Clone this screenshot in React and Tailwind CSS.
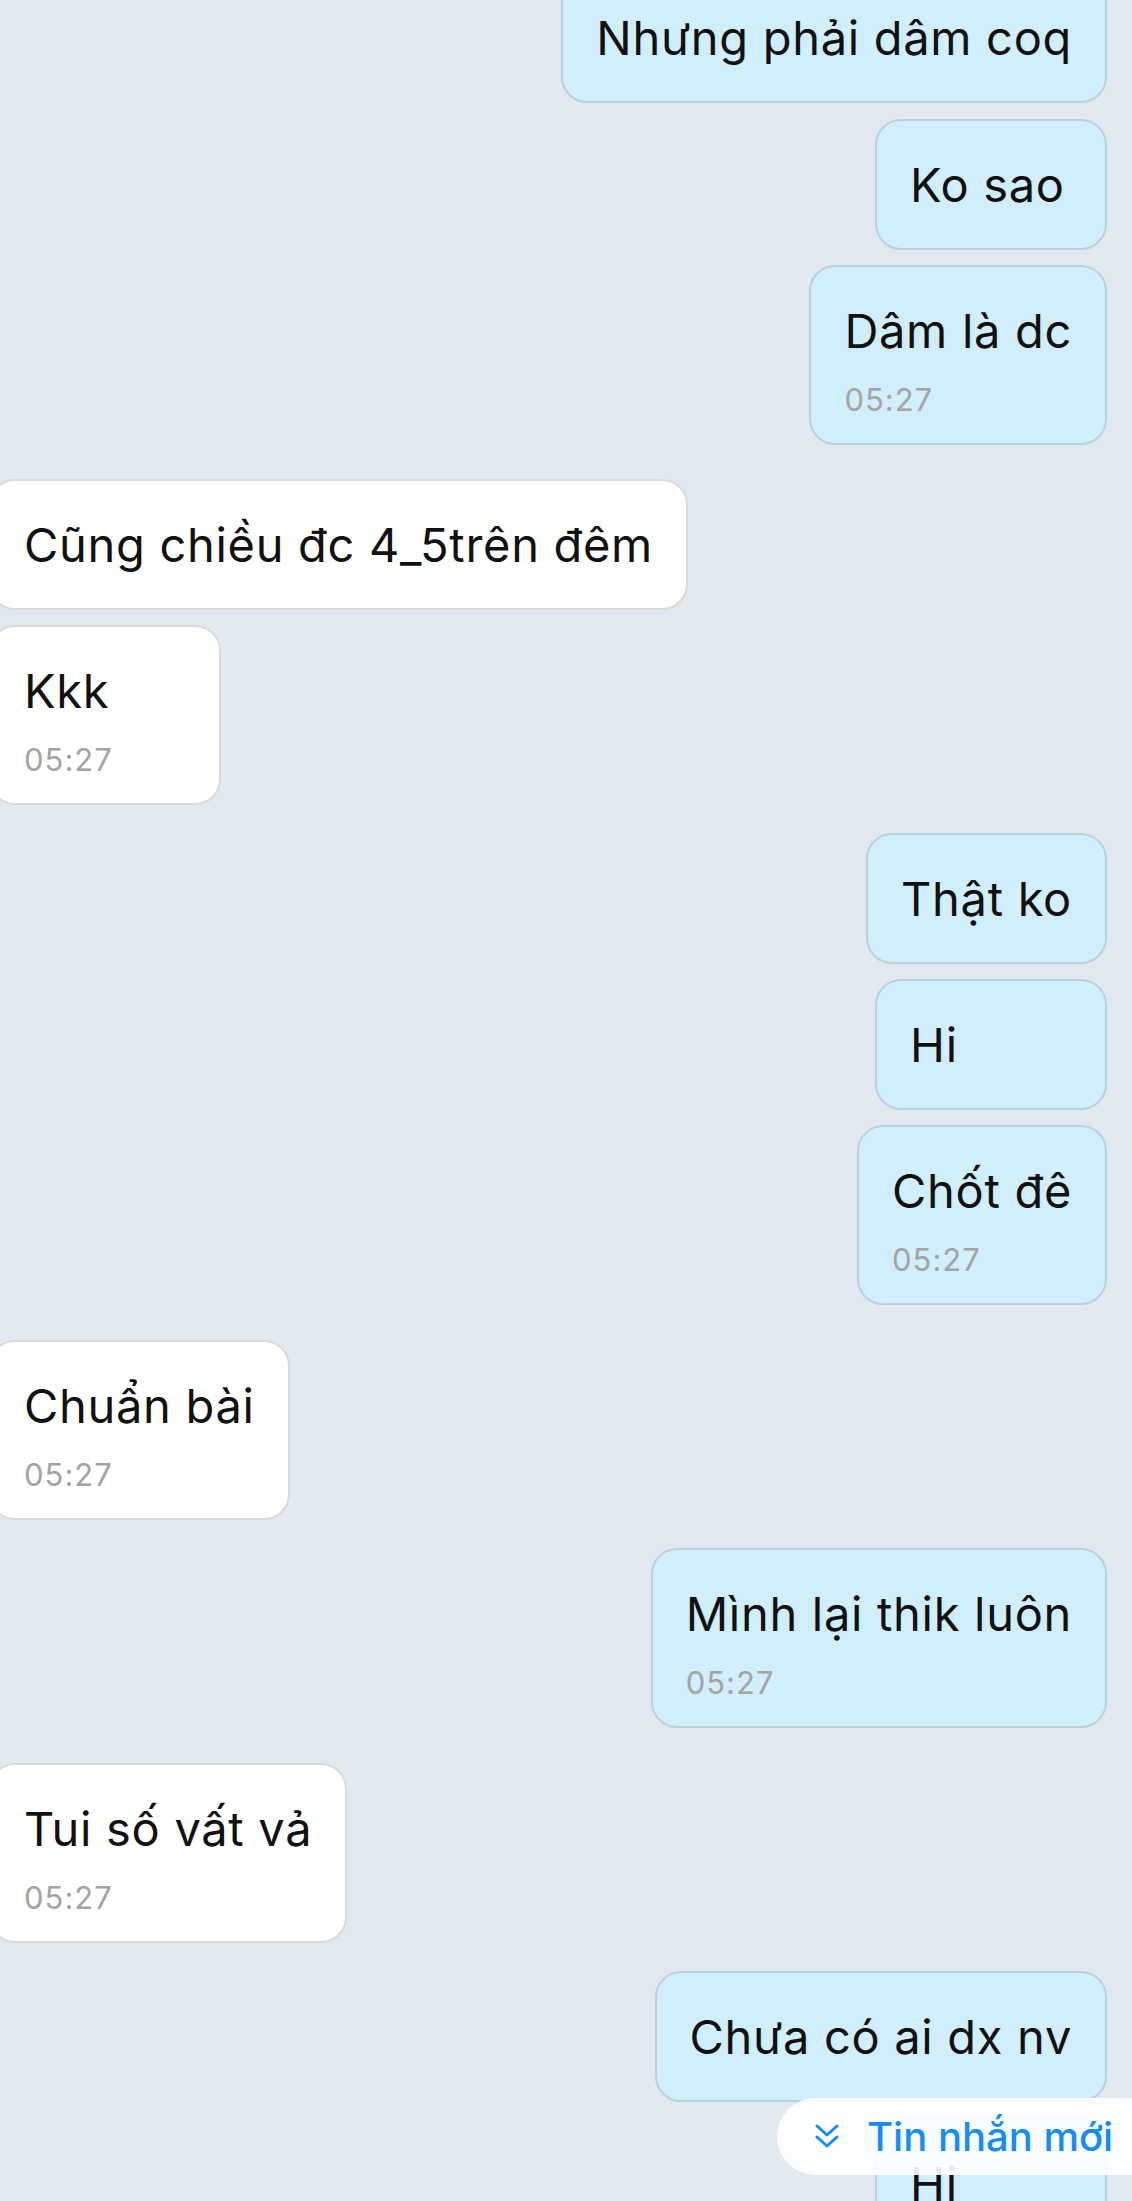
const messages = [
  { side: 'right', text: 'Nhưng phải dâm coq', gap: '-mt-[28px]' },
  { side: 'right', text: 'Ko sao', gap: 'mt-[16px]' },
  { side: 'right', text: 'Dâm là dc', time: '05:27', gap: 'mt-[15px]' },
  { side: 'left', text: 'Cũng chiều đc 4_5trên đêm', gap: 'mt-[34px]' },
  { side: 'left', text: 'Kkk', time: '05:27', gap: 'mt-[15px]' },
  { side: 'right', text: 'Thật ko', gap: 'mt-[28px]' },
  { side: 'right', text: 'Hi', gap: 'mt-[15px]' },
  { side: 'right', text: 'Chốt đê', time: '05:27', gap: 'mt-[15px]' },
  { side: 'left', text: 'Chuẩn bài', time: '05:27', gap: 'mt-[35px]' },
  { side: 'right', text: 'Mình lại thik luôn', time: '05:27', gap: 'mt-[28px]' },
  { side: 'left', text: 'Tui số vất vả', time: '05:27', gap: 'mt-[35px]' },
  { side: 'right', text: 'Chưa có ai dx nv', gap: 'mt-[28px]' },
  { side: 'right', text: 'Hi', gap: 'mt-[16px]' },
];

export default function App() {
  return <div className="relative h-[2201px] w-full overflow-hidden bg-[#e1e8f0] font-[Inter,sans-serif]">
    <div className="flex flex-col">
      {messages.map((m, i) => <Bubble key={i} {...m}/>)}
    </div>
    <NewMessages/>
  </div>;
}

function Bubble({ side, text, time, gap }) {
  const mine = side === 'right';
  return <div className={`flex ${mine ? 'justify-end pr-[25px]' : 'justify-start'} ${gap}`}>
    <div className={`min-w-[232px] rounded-[26px] border-2 px-[33px] pt-[35px] ${time ? 'pb-[25px]' : 'pb-[35px]'} ${mine ? 'border-[#b9d1dc] bg-[#d0eefb]' : '-ml-[11px] border-[#dadada] bg-white'}`}>
      <p className="whitespace-nowrap text-[47px] leading-[57px] tracking-[0.7px] text-[#111111]">{text}</p>
      {time && <p className="mt-[23px] text-[31px] leading-[36px] tracking-[1px] text-[#a3a3a3]">{time}</p>}
    </div>
  </div>;
}

function NewMessages() {
  return <div className="absolute left-[777px] right-0 top-[2098px] flex h-[77px] items-center gap-[28px] rounded-l-full bg-white/90 pl-[38px]">
    <svg width="24" height="26" viewBox="0 0 24 26" fill="none" stroke="#158cf6" strokeWidth="3" strokeLinecap="round" strokeLinejoin="round">
      <polyline points="2,2 12,11 22,2"/>
      <polyline points="2,13 12,22 22,13"/>
    </svg>
    <span className="whitespace-nowrap text-[40px] font-medium leading-none text-[#158cf6]">Tin nhắn mới</span>
  </div>;
}
